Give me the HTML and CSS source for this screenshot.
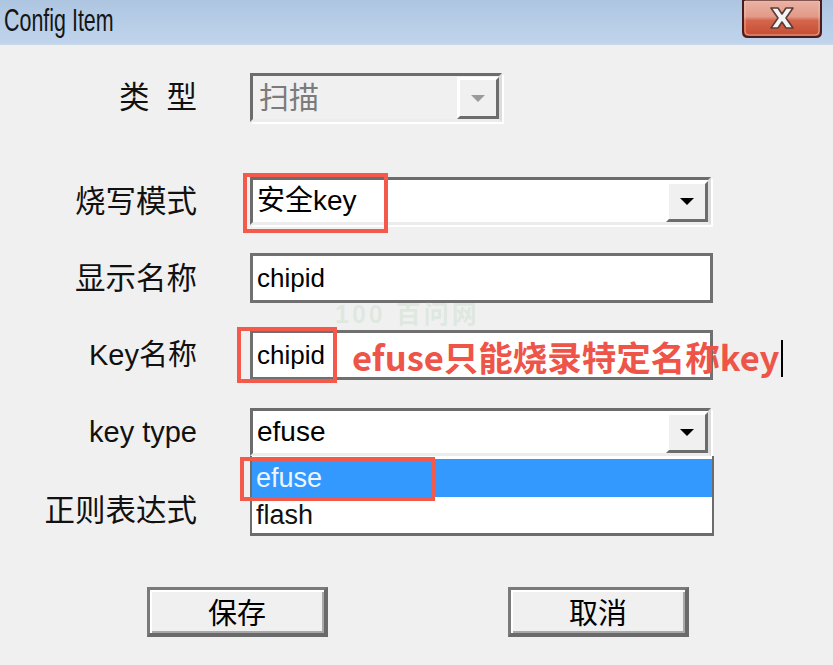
FILE: index.html
```html
<!DOCTYPE html>
<html lang="zh">
<head>
<meta charset="utf-8">
<title>Config Item</title>
<link rel="stylesheet" href="styles.css">
</head>
<body>
<div class="window">
  <div class="titlebar">
    <span class="title">Config Item</span>
    <div class="close">
      <svg width="80" height="38" viewBox="0 0 80 38">
        <defs>
          <linearGradient id="cg" x1="0" y1="0" x2="0" y2="1">
            <stop offset="0" stop-color="#e9b3a6"/>
            <stop offset="0.45" stop-color="#e29a88"/>
            <stop offset="0.55" stop-color="#d4664c"/>
            <stop offset="1" stop-color="#c44a30"/>
          </linearGradient>
        </defs>
        <path d="M1 0 H79 V32 Q79 37 74 37 H6 Q1 37 1 32 Z" fill="url(#cg)" stroke="#4a1c1c" stroke-width="2"/>
        <path d="M3 1 H77 V31 Q77 35 73 35 H7 Q3 35 3 31 Z" fill="none" stroke="#f2c4b8" stroke-width="1" opacity="0.7"/>
        <path d="M29 8 H36 L40 14 L44 8 H51 L44 18 L51 28 H44 L40 22 L36 28 H29 L36 18 Z" fill="#f4f4f4" stroke="#5b3b36" stroke-width="1.6" stroke-linejoin="round"/>
      </svg>
    </div>
  </div>

  <div class="content">
    <div class="row r1">
      <div class="label">类<span class="gap"></span>型</div>
      <div class="combo disabled w-short">
        <span class="value">扫描</span>
        <span class="drop"><span class="arrow"></span></span>
      </div>
    </div>

    <div class="row r2">
      <div class="label">烧写模式</div>
      <div class="combo w-long">
        <span class="value">安全key</span>
        <span class="drop"><span class="arrow"></span></span>
        <span class="mark mark-mode"></span>
      </div>
    </div>

    <div class="row r3">
      <div class="label">显示名称</div>
      <div class="input w-input"><span class="value">chipid</span></div>
    </div>

    <div class="row r4">
      <div class="label latin">Key名称</div>
      <div class="input w-input">
        <span class="value">chipid</span>
        <span class="mark mark-key"></span>
        <span class="watermark">100 百问网</span>
        <span class="note">efuse只能烧录特定名称key<span class="caret"></span></span>
      </div>
    </div>

    <div class="row r5">
      <div class="label latin">key type</div>
      <div class="combo w-long">
        <span class="value">efuse</span>
        <span class="drop"><span class="arrow"></span></span>
        <ul class="list">
          <li class="sel">efuse</li>
          <li>flash</li>
        </ul>
        <span class="mark mark-type"></span>
      </div>
    </div>

    <div class="row r6">
      <div class="label">正则表达式</div>
      <div class="input w-input"></div>
    </div>

    <div class="buttons">
      <button class="btn btn-save">保存</button>
      <button class="btn btn-cancel">取消</button>
    </div>
  </div>
</div>
</body>
</html>
```

FILE: styles.css
```css
* { box-sizing: border-box; }
html, body {
  margin: 0;
  padding: 0;
  width: 833px;
  height: 665px;
  overflow: hidden;
  background: #f0f0f0;
  font-family: "Liberation Sans", "Noto Sans CJK SC", sans-serif;
  color: #000;
}
.window { width: 833px; height: 665px; background: #f0f0f0; }

.titlebar {
  position: relative;
  height: 45px;
  background: linear-gradient(to bottom, #aec5e1 0%, #b9cfe8 60%, #c0d4ec 100%);
  border-bottom: 1px solid #c9d8e8;
}
.title {
  position: absolute;
  left: 4px;
  top: 2px;
  font-size: 32px;
  line-height: 36px;
  color: #151515;
  transform: scaleX(0.67);
  transform-origin: left top;
  white-space: nowrap;
}
.close {
  position: absolute;
  left: 742px;
  top: 0;
  width: 80px;
  height: 38px;
}
.close svg { display: block; }

.content { padding-top: 28px; }

.row {
  display: flex;
  align-items: center;
  position: relative;
}
.label {
  width: 197px;
  text-align: right;
  font-size: 30.5px;
  line-height: 1;
  white-space: nowrap;
  margin-right: 53px;
  color: #111;
}
.label.latin { font-size: 29px; }
.label .gap { display: inline-block; width: 17px; }

.r2 { margin-top: 55px; }
.r3 { margin-top: 28px; }
.r4 { margin-top: 27px; }
.r5 { margin-top: 28px; }
.r6 { margin-top: 29px; }

.w-short { width: 252px; height: 49px; }
.w-long { width: 461px; height: 48px; }
.w-input { width: 463px; height: 50px; }

.combo, .input {
  position: relative;
  background: #fff;
  display: flex;
  align-items: center;
}
.combo {
  border-top: 3px solid #6c6c6c;
  border-left: 3px solid #6c6c6c;
  border-right: 3px solid #dcdcdc;
  border-bottom: 3px solid #ececec;
  box-shadow: 2px 2px 0 #ffffff;
}
.combo.disabled { background: #f0f0f0; color: #7b7b7b; }
.input { border: 3px solid #707070; }

.value {
  padding-left: 4px;
  font-size: 26px;
  line-height: 1;
  white-space: nowrap;
}
.combo .value { font-size: 28px; }
.combo.disabled .value { font-size: 30px; padding-left: 6px; }

.drop {
  position: absolute;
  right: 0;
  top: 1px;
  bottom: 0;
  width: 42px;
  background: #f0f0f0;
  border-top: 3px solid #ffffff;
  border-left: 3px solid #ffffff;
  border-right: 3px solid #6c6c6c;
  border-bottom: 3px solid #6c6c6c;
  display: flex;
  align-items: center;
  justify-content: center;
}
.arrow {
  width: 0;
  height: 0;
  border-left: 7px solid transparent;
  border-right: 7px solid transparent;
  border-top: 7px solid #000;
}
.disabled .arrow { border-top-color: #9a9a9a; }

.mark {
  position: absolute;
  border: 4px solid #f45a4b;
  pointer-events: none;
}
.mark-mode { left: -10px; top: -7px; width: 145px; height: 60px; }
.mark-key { left: -16px; top: -6px; width: 100px; height: 56px; }
.mark-type { left: -13px; top: 46px; width: 195px; height: 44px; z-index: 3; }

.watermark {
  position: absolute;
  left: 82px;
  top: -31px;
  font-size: 25px;
  line-height: 1;
  color: rgba(170, 210, 170, 0.25);
  white-space: nowrap;
  font-weight: bold;
  letter-spacing: 3px;
}
.note {
  position: absolute;
  left: 99px;
  top: 4px;
  font-size: 34.5px;
  line-height: 38px;
  font-weight: bold;
  color: #ee5448;
  white-space: nowrap;
  font-family: "Noto Sans CJK SC", sans-serif;
}
.caret {
  display: inline-block;
  width: 2px;
  height: 37px;
  background: #000;
  margin-left: 2px;
  vertical-align: -6px;
}

.list {
  position: absolute;
  left: -3px;
  top: 45px;
  width: 464px;
  margin: 0;
  padding: 3px 0 0 0;
  list-style: none;
  background: #fff;
  border: 2px solid #6c6c6c;
  border-top: none;
  border-bottom-width: 3px;
  z-index: 2;
}
.list li {
  height: 36px;
  line-height: 36px;
  font-size: 27px;
  padding-left: 4px;
  color: #111;
}
.list li.sel { background: #3399ff; color: #eef5ff; height: 38px; line-height: 38px; }

.buttons {
  position: relative;
  margin-top: 52px;
  height: 50px;
  display: flex;
  padding-left: 147px;
}
.btn {
  width: 181px;
  height: 50px;
  background: #f0f0f0;
  border-top: 3px solid #7a7a7a;
  border-left: 3px solid #7a7a7a;
  border-right: 4px solid #6a6a6a;
  border-bottom: 4px solid #6a6a6a;
  box-shadow: inset 2px 2px 0 #ffffff, inset -2px -2px 0 #a8a8a8;
  font-family: "Noto Sans CJK SC", sans-serif;
  font-size: 29px;
  line-height: 1;
  color: #000;
  padding: 0;
}
.btn-cancel { margin-left: 180px; }
```
